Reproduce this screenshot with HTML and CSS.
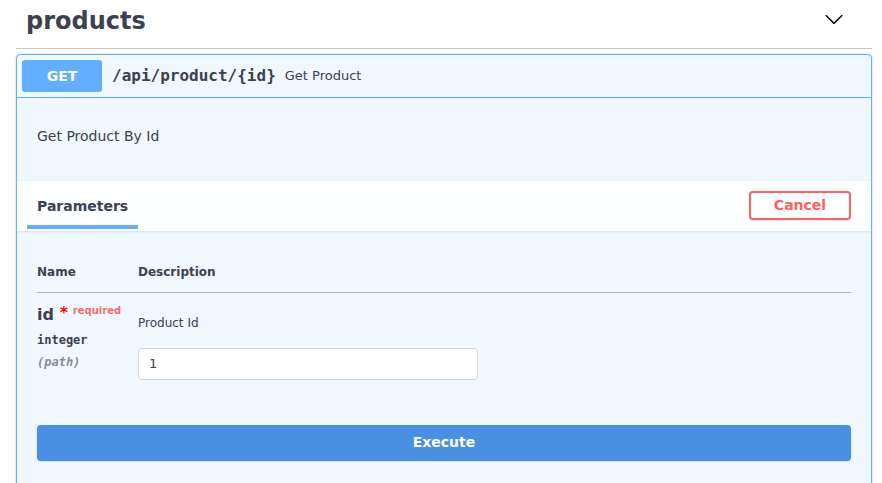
FILE: index.html
```html
<!DOCTYPE html>
<html>
<head>
<meta charset="utf-8">
<link rel="stylesheet" href="styles.css">
</head>
<body>
<div class="page">
  <div class="tag">
    <h3 class="tag-title">products</h3>
    <svg class="chev" width="20" height="20" viewBox="0 0 20 20" aria-hidden="true">
      <path d="M17.418 6.109c.272-.268.709-.268.979 0s.271.701 0 .969l-7.908 7.83c-.27.268-.707.268-.979 0l-7.908-7.83c-.27-.268-.27-.701 0-.969.271-.268.709-.268.979 0L10 13.25l7.418-7.141z"/>
    </svg>
  </div>
  <div class="opblock">
    <div class="summary">
      <span class="method">GET</span>
      <span class="path">/api/product/{id}</span>
      <span class="sum-desc">Get Product</span>
    </div>
    <div class="desc"><p>Get Product By Id</p></div>
    <div class="section-header">
      <div class="tab"><span class="tab-item">Parameters</span></div>
      <button class="cancel">Cancel</button>
    </div>
    <div class="table-container">
      <table class="params">
        <thead>
          <tr><th class="col-name">Name</th><th>Description</th></tr>
        </thead>
        <tbody>
          <tr>
            <td class="col-name cell-name">
              <div class="pname">id<span class="star">*</span><span class="req">required</span></div>
              <div class="ptype">integer</div>
              <div class="pin">(path)</div>
            </td>
            <td class="cell-desc">
              <p class="pdesc">Product Id</p>
              <input class="pinput" type="text" value="1">
            </td>
          </tr>
        </tbody>
      </table>
    </div>
    <div class="execute-wrapper"><button class="execute">Execute</button></div>
  </div>
</div>
</body>
</html>
```
FILE: styles.css
```css
html, body {
  margin: 0;
  padding: 0;
  background: #fff;
}
body {
  font-family: "DejaVu Sans", sans-serif;
  color: #3b4151;
}
.page {
  padding: 0 10px 0 16px;
}
.tag {
  display: flex;
  align-items: flex-start;
  border-bottom: 1px solid rgba(59, 65, 81, 0.3);
  margin-bottom: 5px;
}
.tag-title {
  flex: 1;
  margin: 0;
  padding: 7px 0 13px 10px;
  font-size: 24px;
  line-height: 28px;
  font-weight: bold;
  color: #3b4151;
}
.chev {
  margin: 9px 28px 0 0;
  fill: #000;
}
.opblock {
  border: 1px solid #61affe;
  border-radius: 4px;
  background: rgba(97, 175, 254, 0.1);
  box-shadow: 0 0 3px rgba(0, 0, 0, 0.19);
  height: 440px;
  overflow: hidden;
}
.summary {
  display: flex;
  align-items: center;
  padding: 5px;
  border-bottom: 1px solid #61affe;
}
.method {
  width: 80px;
  height: 32px;
  line-height: 32px;
  text-align: center;
  background: #61affe;
  color: #fff;
  font-size: 14px;
  font-weight: bold;
  border-radius: 3px;
}
.path {
  padding: 0 9px 2px 10px;
  font-family: "DejaVu Sans Mono", monospace;
  font-weight: bold;
  font-size: 16px;
  color: #3b4151;
}
.sum-desc {
  padding-bottom: 2px;
  font-size: 13px;
  color: #3b4151;
}
.desc {
  padding: 30px 20px 37px;
}
.desc p {
  margin: 0;
  font-size: 14px;
  line-height: 16px;
}
.section-header {
  display: flex;
  align-items: center;
  justify-content: space-between;
  height: 50px;
  padding: 0 20px 0 10px;
  background: rgba(255, 255, 255, 0.8);
  box-shadow: 0 1px 2px rgba(0, 0, 0, 0.1);
}
.tab {
  align-self: stretch;
}
.tab-item {
  display: block;
  padding: 17px 10px 0;
  height: 27px;
  font-size: 14px;
  line-height: 16px;
  font-weight: bold;
  border-bottom: 4px solid #61affe;
}
.cancel {
  width: 102px;
  height: 29px;
  margin-bottom: 2px;
  padding: 0 0 1px;
  border: 2px solid #ff6060;
  border-radius: 4px;
  background: transparent;
  color: #ff6060;
  font-family: "DejaVu Sans", sans-serif;
  font-size: 14px;
  font-weight: bold;
  box-shadow: 0 1px 2px rgba(0, 0, 0, 0.1);
}
.table-container {
  padding: 20px 20px 0;
}
.params {
  width: 100%;
  border-collapse: collapse;
}
.params th {
  text-align: left;
  font-size: 12px;
  line-height: 14px;
  font-weight: bold;
  padding: 14px 0 13px;
  border-bottom: 1px solid rgba(59, 65, 81, 0.2);
}
.col-name {
  width: 101px;
}
.params td {
  vertical-align: top;
  padding: 0;
}
.cell-name {
  padding-top: 12px !important;
}
.pname {
  font-size: 16px;
  line-height: 19px;
  font-weight: bold;
  white-space: nowrap;
}
.star {
  color: red;
  margin-left: 6px;
  position: relative;
  top: -2px;
  font-size: 15px;
}
.req {
  color: rgba(255, 0, 0, 0.6);
  font-size: 10px;
  margin-left: 5px;
  position: relative;
  top: -6px;
}
.ptype {
  margin-top: 7px;
  font-family: "DejaVu Sans Mono", monospace;
  font-size: 12px;
  line-height: 14px;
  font-weight: bold;
}
.pin {
  margin-top: 8px;
  font-family: "DejaVu Sans Mono", monospace;
  font-size: 12px;
  line-height: 14px;
  font-style: italic;
  font-weight: bold;
  color: rgba(59, 65, 81, 0.6);
}
.cell-desc {
  padding-top: 23px !important;
}
.pdesc {
  margin: 0 0 18px;
  font-size: 12px;
  line-height: 14px;
}
.pinput {
  display: block;
  box-sizing: border-box;
  width: 340px;
  height: 32px;
  padding: 0 10px 2px;
  border: 1px solid #d9d9d9;
  border-radius: 4px;
  background: #fff;
  font-family: "DejaVu Sans", sans-serif;
  font-size: 13px;
  color: #3b4151;
  outline: none;
}
.execute-wrapper {
  padding: 45px 20px 20px;
}
.execute {
  display: block;
  width: 100%;
  height: 36px;
  padding: 0 0 2px;
  border: none;
  border-radius: 4px;
  background: #4990e2;
  color: #fff;
  font-family: "DejaVu Sans", sans-serif;
  font-size: 14px;
  font-weight: bold;
  box-shadow: 0 1px 2px rgba(0, 0, 0, 0.1);
}
```
